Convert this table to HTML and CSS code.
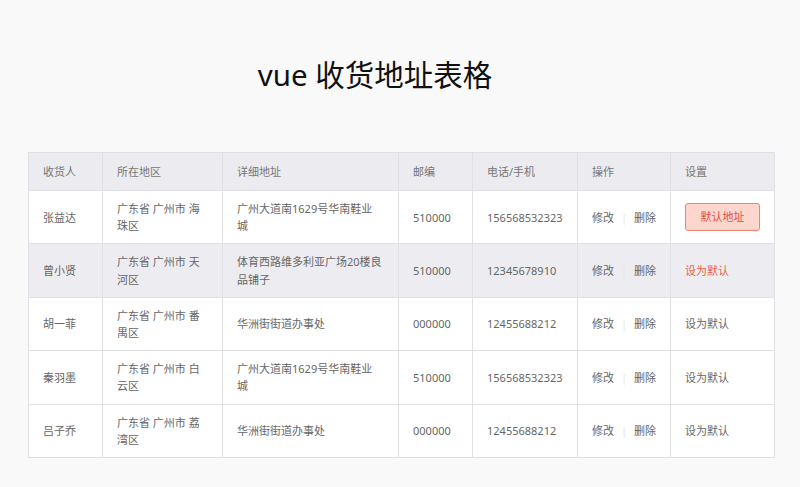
FILE: index.html
```html
<!DOCTYPE html>
<html lang="zh-CN">
<head>
<meta charset="utf-8">
<title>vue 收货地址表格</title>
<link rel="stylesheet" href="styles.css">
</head>
<body>
<div class="page">
  <h1 class="title">vue 收货地址表格</h1>
  <table class="addr-table">
    <colgroup>
      <col class="c-name"><col class="c-region"><col class="c-addr"><col class="c-zip"><col class="c-tel"><col class="c-op"><col class="c-set">
    </colgroup>
    <thead>
      <tr><th>收货人</th><th>所在地区</th><th>详细地址</th><th>邮编</th><th>电话/手机</th><th>操作</th><th>设置</th></tr>
    </thead>
    <tbody>
      <tr>
        <td>张益达</td><td>广东省 广州市 海珠区</td><td class="addr">广州大道南1629号华南鞋业城</td><td>510000</td><td>156568532323</td>
        <td class="ops"><span class="op">修改</span><span class="sep">|</span><span class="op">删除</span></td>
        <td><span class="btn-default">默认地址</span></td>
      </tr>
      <tr class="hover">
        <td>曾小贤</td><td>广东省 广州市 天河区</td><td class="addr">体育西路维多利亚广场20楼良品铺子</td><td>510000</td><td>12345678910</td>
        <td class="ops"><span class="op">修改</span><span class="sep">|</span><span class="op">删除</span></td>
        <td><span class="set-link active">设为默认</span></td>
      </tr>
      <tr>
        <td>胡一菲</td><td>广东省 广州市 番禺区</td><td class="addr">华洲街街道办事处</td><td>000000</td><td>12455688212</td>
        <td class="ops"><span class="op">修改</span><span class="sep">|</span><span class="op">删除</span></td>
        <td><span class="set-link">设为默认</span></td>
      </tr>
      <tr>
        <td>秦羽墨</td><td>广东省 广州市 白云区</td><td class="addr">广州大道南1629号华南鞋业城</td><td>510000</td><td>156568532323</td>
        <td class="ops"><span class="op">修改</span><span class="sep">|</span><span class="op">删除</span></td>
        <td><span class="set-link">设为默认</span></td>
      </tr>
      <tr>
        <td>吕子乔</td><td>广东省 广州市 荔湾区</td><td class="addr">华洲街街道办事处</td><td>000000</td><td>12455688212</td>
        <td class="ops"><span class="op">修改</span><span class="sep">|</span><span class="op">删除</span></td>
        <td><span class="set-link">设为默认</span></td>
      </tr>
    </tbody>
  </table>
</div>
</body>
</html>
```

FILE: styles.css
```css
html, body {
  margin: 0;
  padding: 0;
  background: #f9f9fa;
}
body {
  font-family: "Noto Sans", "Noto Sans CJK SC", sans-serif;
  color: #666;
}
.page {
  padding: 55px 26px 20px 28px;
}
.title {
  margin: 0 0 57px 0;
  padding-right: 52px;
  text-align: center;
  font-size: 29.5px;
  line-height: 40px;
  font-weight: normal;
  color: #111;
}
.addr-table {
  width: 746px;
  border-collapse: collapse;
  table-layout: fixed;
  background: #fff;
  font-size: 11px;
}
.c-name { width: 74px; }
.c-region { width: 120px; }
.c-addr { width: 176px; }
.c-zip { width: 74px; }
.c-tel { width: 105px; }
.c-op { width: 93px; }
.c-set { width: 104px; }
.addr-table th,
.addr-table td {
  border: 1px solid #dfdfe4;
  text-align: left;
  vertical-align: middle;
  padding: 9px 14px;
  line-height: 17.2px;
  font-weight: normal;
  color: #666;
}
.addr-table th {
  background: #ebebf0;
  padding-top: 10px;
  padding-bottom: 10px;
  line-height: 17px;
  color: #777;
}
.addr-table td.addr {
  padding-right: 15.5px;
}
.addr-table td.ops {
  white-space: nowrap;
  padding-right: 4px;
}
.addr-table tr.hover td {
  background: #ededf1;
}
.sep {
  color: #e4e4e4;
  margin: 0 7px;
}
.btn-default {
  display: inline-block;
  width: 73px;
  height: 26px;
  line-height: 26px;
  text-align: center;
  background: #ffd6ce;
  border: 1px solid #ee8472;
  border-radius: 3px;
  color: #e2513a;
}
.set-link {
  color: #666;
}
.set-link.active {
  color: #ee5f44;
}
```
